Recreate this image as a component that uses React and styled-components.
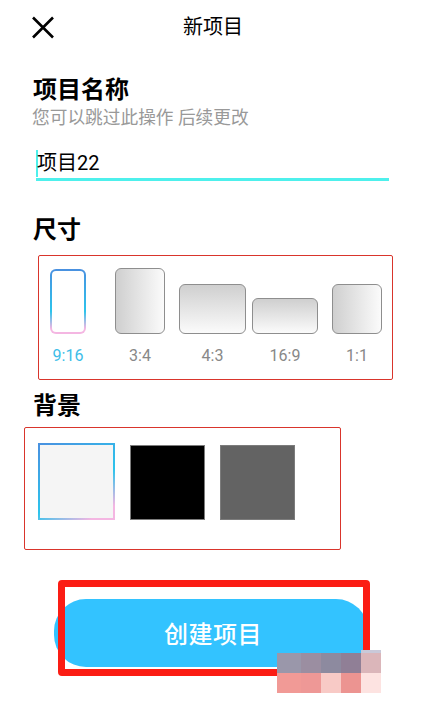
import React from "react";
import styled, { createGlobalStyle } from "styled-components";

const GlobalStyle = createGlobalStyle`
  html, body {
    margin: 0;
    padding: 0;
    background: #fff;
  }
  * {
    box-sizing: border-box;
  }
`;

const Page = styled.div`
  position: relative;
  width: 436px;
  height: 710px;
  overflow: hidden;
  background: #fff;
  color: #000;
  font-family: Roboto, "Noto Sans CJK SC", sans-serif;
`;

const Header = styled.div`
  display: flex;
  align-items: center;
  height: 54px;
  padding: 0 65px 0 30px;
`;

const CloseButton = styled.div`
  display: flex;
  width: 25px;
  height: 25px;
`;

const Title = styled.div`
  flex: 1;
  text-align: center;
  font-size: 20px;
  line-height: 28px;
`;

const Heading = styled.div`
  margin: ${(p) => p.$top}px 0 0 33px;
  font-size: 24px;
  line-height: 30px;
  font-weight: 700;
`;

const Hint = styled.div`
  margin: 1px 0 0 32px;
  font-size: 17.7px;
  line-height: 24px;
  color: #999;
`;

const NameField = styled.div`
  display: flex;
  align-items: center;
  width: 353px;
  height: 35px;
  margin: 16px 0 0 36px;
  border-bottom: 3px solid #4ef0ec;
  font-size: 20px;
`;

const Caret = styled.span`
  width: 2px;
  height: 27px;
  margin-top: 2px;
  background: #4ef0ec;
`;

const FieldText = styled.span`
  margin-top: 1px;
  margin-left: -1px;
  line-height: 28px;
`;

const NoteBox = styled.div`
  width: ${(p) => p.$width}px;
  height: ${(p) => p.$height}px;
  margin: ${(p) => p.$top}px 0 0 ${(p) => p.$left}px;
  border: 1px solid #d9352c;
  border-radius: 2px;
`;

const SizeRow = styled(NoteBox)`
  display: flex;
  padding: 11px 10px 0 11px;
`;

const SizeOption = styled.div`
  display: flex;
  flex-direction: column;
  align-items: center;
  width: ${(p) => p.$width}px;
  margin-right: ${(p) => p.$gap || 0}px;
`;

const SizeSlot = styled.div`
  display: flex;
  align-items: flex-end;
  height: 67px;
`;

const SizeShape = styled.div`
  width: ${(p) => p.$width}px;
  height: ${(p) => p.$height}px;
  border: 1px solid #8e8e8e;
  border-radius: 6px;
  background: linear-gradient(${(p) => p.$angle}deg, #cfcfcf 0%, #fbfbfb 100%);
`;

const SelectedShape = styled.div`
  width: ${(p) => p.$width}px;
  height: ${(p) => p.$height}px;
  border: 2px solid transparent;
  border-radius: 6px;
  background:
    linear-gradient(#fff, #fff) padding-box,
    linear-gradient(180deg, #4a90e0 0%, #2cc4ec 65%, #f4b6e2 92%) border-box;
`;

const SizeLabel = styled.div`
  margin-top: 12px;
  font-size: 16px;
  line-height: 20px;
  white-space: nowrap;
  color: ${(p) => (p.$active ? "#3dbde8" : "#888")};
`;

const SwatchRow = styled(NoteBox)`
  display: flex;
  align-items: flex-start;
  gap: 15px;
  padding: 15px 0 0 13px;
`;

const Swatch = styled.div`
  width: 75px;
  height: 75px;
  margin-top: 2px;
  background: ${(p) => p.$color};
  border: 1px solid #7c7c7c;
`;

const SelectedSwatch = styled.div`
  width: 77px;
  height: 77px;
  border: 2px solid transparent;
  background:
    linear-gradient(#f5f5f5, #f5f5f5) padding-box,
    linear-gradient(150deg, #4a90e0 0%, #2cc4ec 58%, #f4b6e2 88%) border-box;
`;

const CreateButton = styled.div`
  display: flex;
  align-items: center;
  justify-content: center;
  width: 314px;
  height: 68px;
  margin: 49px 0 0 54px;
  padding: 0 0 2px 4px;
  border-radius: 32px;
  background: #33c3ff;
  color: #fff;
  font-size: 24px;
  font-weight: 500;
  letter-spacing: 0.5px;
`;

const ButtonMark = styled.div`
  position: absolute;
  left: 58px;
  top: 580px;
  width: 312px;
  height: 96px;
  border: 7px solid #fb1d14;
  border-radius: 4px;
`;

const Mosaic = styled.div`
  position: absolute;
  left: 277px;
  top: 653px;
  display: grid;
  grid-template-columns: 24px 20px 20px 20px 20px;
  grid-auto-rows: 20px;
`;

const MosaicCell = styled.div`
  background: ${(p) => p.$color};
`;

const MosaicEdge = styled.div`
  position: absolute;
  left: 361px;
  top: 650px;
  width: 20px;
  height: 3px;
  background: #c9c9d9;
`;

const sizes = [
  { label: "3:4", slot: 50, width: 50, height: 66, angle: 90, gap: 14 },
  { label: "4:3", slot: 67, width: 67, height: 50, angle: 180, gap: 6 },
  { label: "16:9", slot: 66, width: 66, height: 36, angle: 180, gap: 14 },
  { label: "1:1", slot: 50, width: 50, height: 50, angle: 90 },
];

const mosaicColors = [
  "#9a97aa", "#9b8ea1", "#8d8a9f", "#907f96", "#dbb6ba",
  "#f19a96", "#ee9896", "#f8cac6", "#ec9491", "#fde3e1",
];

const CloseIcon = () => (
  <svg width="25" height="25" viewBox="0 0 25 25" fill="none">
    <path d="M3 2.5 L23 22.5 M23 2.5 L3 22.5" stroke="#000" strokeWidth="2.6" />
  </svg>
);

const App = () => {
  return (
    <Page>
      <GlobalStyle />
      <Header>
        <CloseButton>
          <CloseIcon />
        </CloseButton>
        <Title>新项目</Title>
      </Header>

      <Heading $top={21}>项目名称</Heading>
      <Hint>您可以跳过此操作 后续更改</Hint>
      <NameField>
        <Caret />
        <FieldText>项目22</FieldText>
      </NameField>

      <Heading $top={34}>尺寸</Heading>
      <SizeRow $width={355} $height={125} $top={10} $left={38}>
        <SizeOption $width={36} $gap={29}>
          <SizeSlot>
            <SelectedShape $width={36} $height={65} />
          </SizeSlot>
          <SizeLabel $active>9:16</SizeLabel>
        </SizeOption>
        {sizes.map((s) => (
          <SizeOption key={s.label} $width={s.slot} $gap={s.gap}>
            <SizeSlot>
              <SizeShape $width={s.width} $height={s.height} $angle={s.angle} />
            </SizeSlot>
            <SizeLabel>{s.label}</SizeLabel>
          </SizeOption>
        ))}
      </SizeRow>

      <Heading $top={11}>背景</Heading>
      <SwatchRow $width={317} $height={123} $top={6} $left={24}>
        <SelectedSwatch />
        <Swatch $color="#000" />
        <Swatch $color="#636363" />
      </SwatchRow>

      <CreateButton>创建项目</CreateButton>
      <ButtonMark />
      <MosaicEdge />
      <Mosaic>
        {mosaicColors.map((c, i) => (
          <MosaicCell key={i} $color={c} />
        ))}
      </Mosaic>
    </Page>
  );
};

export default App;
